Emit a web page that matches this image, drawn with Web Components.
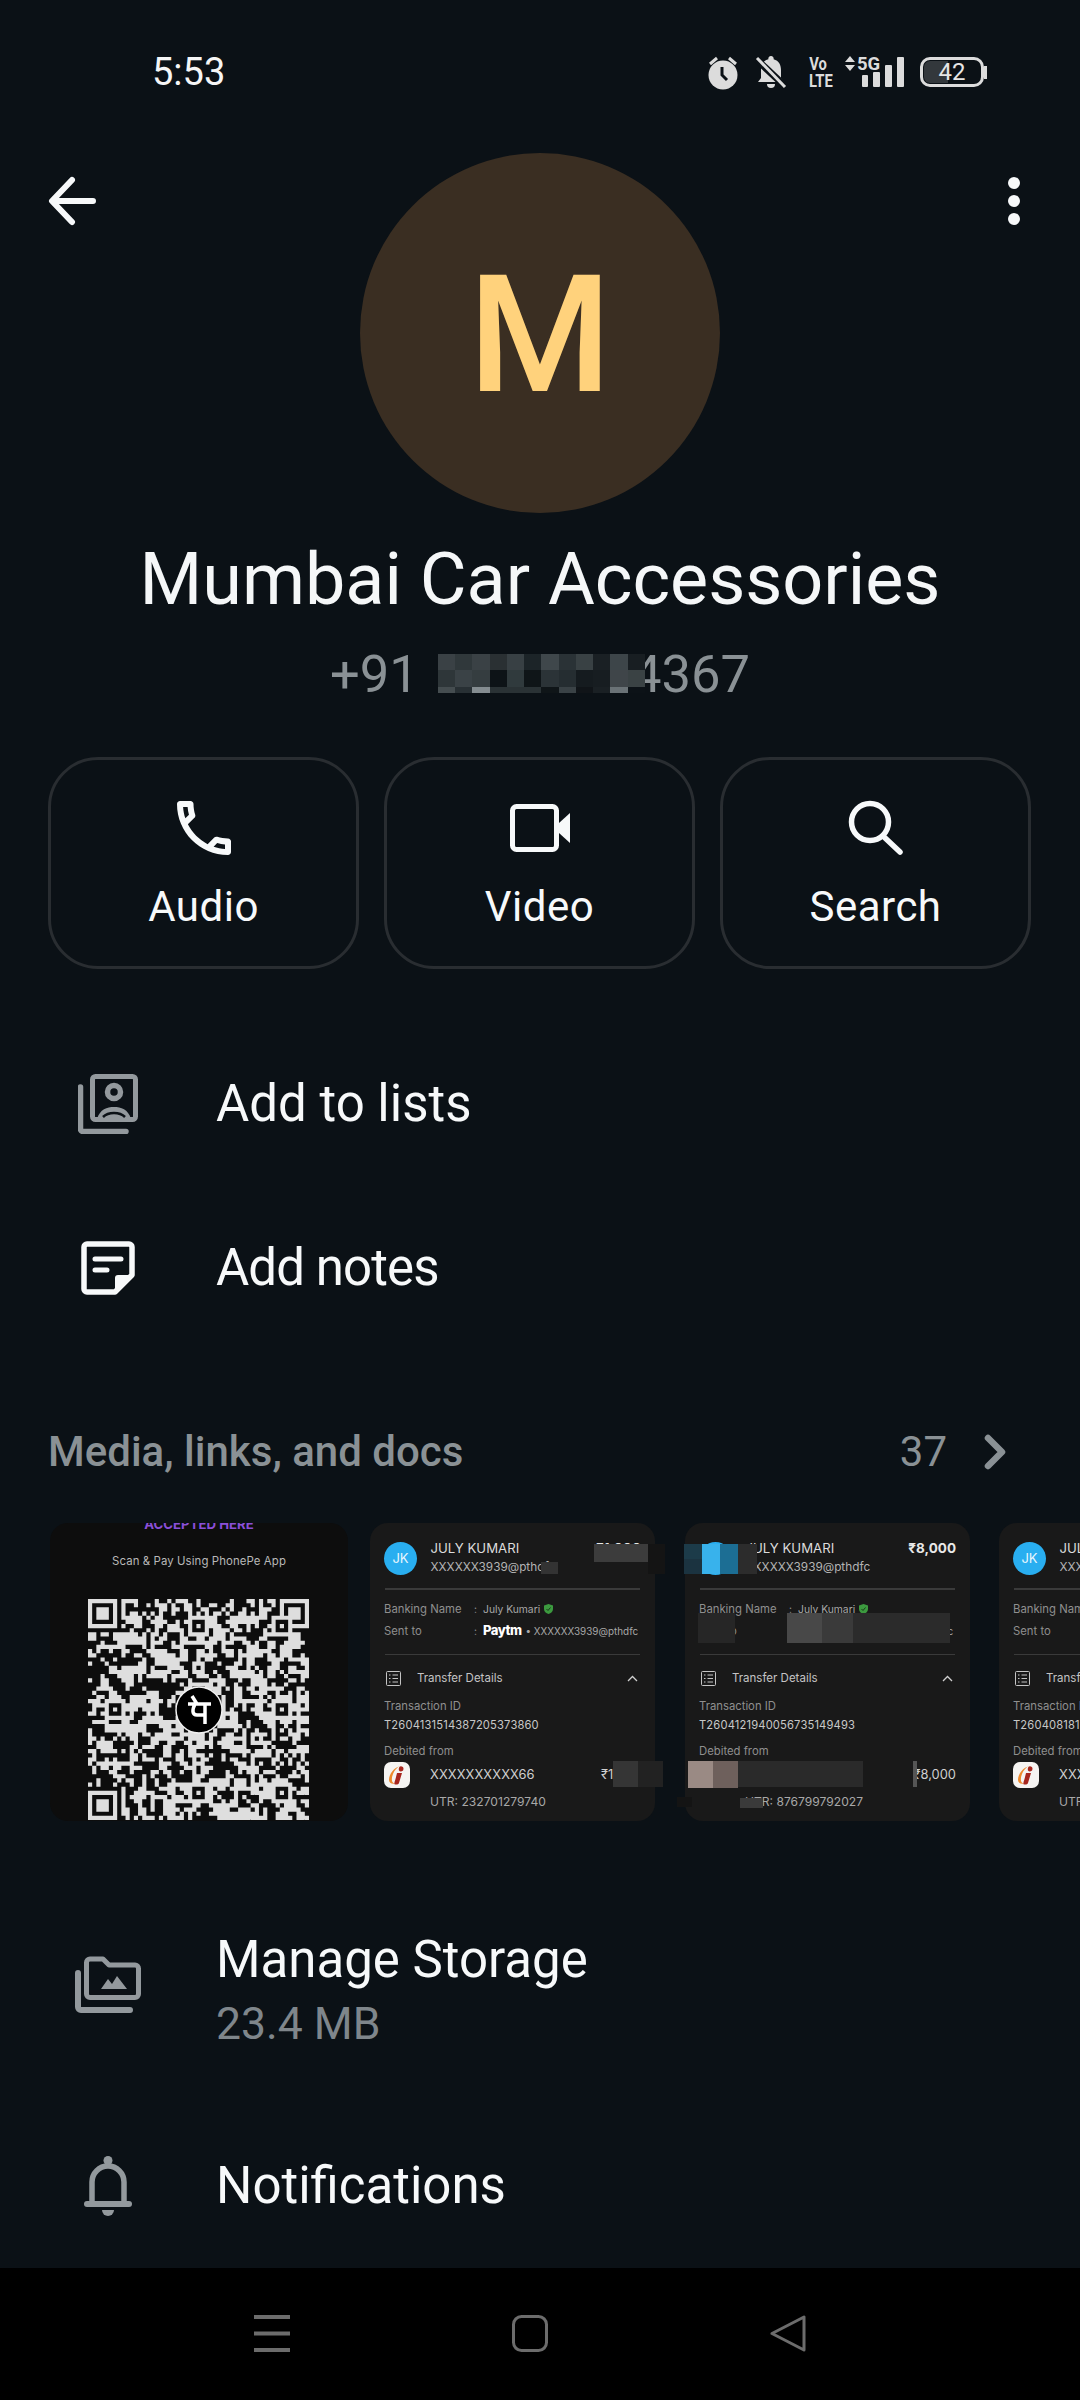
<!DOCTYPE html>
<html>
<head>
<title>Mumbai Car Accessories</title>
<meta charset="utf-8"/>

<style>
html, body { margin: 0; padding: 0; background: #0b1116; }
body {
  width: 1080px;
  height: 2400px;
  display: flex;
  flex-direction: column;
  overflow: hidden;
  font-family: Roboto, "Noto Sans", sans-serif;
  color: #f5f7f8;
}
main { flex: 1; min-height: 0; overflow: hidden; }
</style>

<script>

class StatusBar extends HTMLElement {
  constructor() {
    super()
    this.attachShadow({mode: 'open'}).innerHTML = `
<style>
:host { display: flex; align-items: flex-start; height: 153px; padding: 55px 93px 0 152px; box-sizing: border-box; }
.time { font: 450 38px/34px Roboto, sans-serif; color: #f6f6f6; flex: 1; }
.icons { display: flex; align-items: flex-start; color: #dcdcdc; }
svg { display: block; overflow: visible; }
.volte { width: 22px; margin: 0 16px 0 21px; font: 700 18px/17px Roboto, sans-serif; text-align: center; }
.volte span { display: block; transform: scaleX(.82); white-space: nowrap; }
.batt { display: flex; align-items: center; margin: 2px 0 0 16px; }
.box { position: relative; box-sizing: border-box; width: 64px; height: 30px; border: 3px solid #dcdcdc; border-radius: 10px; display: flex; align-items: center; justify-content: center; font: 400 24px/24px Roboto, sans-serif; color: #e6e6e6; }
.fill { position: absolute; left: 1px; top: 1px; bottom: 1px; width: 24px; background: #33383c; border-radius: 6px 0 0 6px; }
.box b { position: relative; font-weight: 400; }
.nub { width: 3px; height: 13px; background: #dcdcdc; }
</style>
<div class="time">5:53</div>
<div class="icons">
  <svg width="30" height="34" viewBox="0 0 30 34" fill="none">
    <path d="M2 9 9 3M28 9 21 3" stroke="#dcdcdc" stroke-width="3"/>
    <circle cx="15" cy="20" r="14.5" fill="#dcdcdc"/>
    <path d="M14 12V20L19 25" stroke="#0b1116" stroke-width="3"/>
  </svg>
  <svg width="30" height="34" viewBox="0 0 30 34" style="margin-left:18px" fill="none">
    <path d="M15 1a2.6 2.6 0 0 1 2.6 3.2C23 5.500 25 10 25 15V23l3 4H2l3-4V15C5 10 7 5.500 12.400 4.200A2.600 2.600 0 0 1 15 1z" fill="#dcdcdc"/>
    <path d="M11 29h8a4 4 0 0 1-8 0z" fill="#dcdcdc"/>
    <path d="M0 4 30 32" stroke="#0b1116" stroke-width="7"/>
    <path d="M1 3 29 32" stroke="#dcdcdc" stroke-width="3"/>
  </svg>
  <div class="volte"><span>Vo</span><span>LTE</span></div>
  <svg width="59" height="33" viewBox="0 0 59 33" style="margin-top:1px">
    <path d="M0 6 5 0l5 6zM0 9h10l-5 6z" fill="#dcdcdc"/>
    <text x="12" y="14" font-family="Roboto, sans-serif" font-weight="700" font-size="18.500" fill="#dcdcdc">5G</text>
    <rect x="17" y="19" width="6" height="12" rx="1" fill="#dcdcdc"/>
    <rect x="28" y="16" width="7" height="15" rx="1" fill="#dcdcdc"/>
    <rect x="40" y="9" width="7" height="22" rx="1" fill="#dcdcdc"/>
    <rect x="52" y="1" width="7" height="30" rx="1" fill="#dcdcdc"/>
  </svg>
  <div class="batt"><div class="box"><div class="fill"></div><b>42</b></div><div class="nub"></div></div>
</div>`
  }
}
customElements.define('status-bar', StatusBar)

class ContactHeader extends HTMLElement {
  constructor() {
    super()
    this.attachShadow({mode: 'open'}).innerHTML = `
<style>
:host { display: block; text-align: center; }
svg { display: block; }
.top { display: grid; grid-template-columns: 1fr 360px 1fr; }
.back { margin: 23px 0 0 47px; }
.more { margin: 23px 0 0 auto; padding-right: 59px; }
.avatar { width: 360px; height: 360px; border-radius: 50%; background: #3a2e22; color: #ffd27c; font: 500 164px/364px Roboto, sans-serif; }
.name { font: 400 71.900px/84px Roboto, sans-serif; margin-top: 25px; white-space: nowrap; }
.phone { display: flex; justify-content: center; align-items: center; font: 400 52.500px/60px Roboto, sans-serif; color: #8a9195; margin-top: 22px; }
.pix { display: grid; grid-template-columns: repeat(12, 17.250px); grid-template-rows: 16px 17px 6px; width: 207px; height: 39px; margin: -1px -13px 0 19px; position: relative; }
</style>
<div class="top">
  <svg class="back" width="50" height="50" viewBox="0 0 50 50" fill="none" stroke="#f7f9fa" stroke-width="6" stroke-linecap="round" stroke-linejoin="round">
    <path d="M46 25H6M25 4 5 25 25 46"/>
  </svg>
  <div class="avatar">M</div>
  <svg class="more" width="14" height="50" viewBox="0 0 14 50" fill="#f7f9fa">
    <circle cx="7" cy="7" r="6"/><circle cx="7" cy="25" r="6"/><circle cx="7" cy="43" r="6"/>
  </svg>
</div>
<div class="name"><slot name="name"></slot></div>
<div class="phone"><span>+91</span><div class="pix"></div><span>4367</span></div>`
    const cells = ['3a4145','30383b','3a4145','2a3033','384044','1c2428','3f474b','2a3236','394144','1a2024','3d4549','181e22',
      '2e3639','3a4246','353d40','0d1317','303a3d','0f1518','2b3337','252d31','151b1f','171d21','3f4549','3a4244',
      '454d50','283034','848c90','2a3235','2a3235','2a3235','0f1518','3a4246','101418','1a2024','6a7276','0c1217']
    const pix = this.shadowRoot.querySelector('.pix')
    cells.forEach(c => {
      const cell = document.createElement('div')
      cell.style.background = `#${c}`
      pix.appendChild(cell)
    })
  }
}
customElements.define('contact-header', ContactHeader)

class ActionButton extends HTMLElement {
  constructor() {
    super()
    this.attachShadow({mode: 'open'}).innerHTML = `
<style>
:host { display: flex; flex-direction: column; align-items: center; box-sizing: border-box; width: 311px; height: 212px; border: 3px solid #292d31; border-radius: 50px; color: #f7f9fa; font: 400 42px/50px Roboto, sans-serif; }
.icon { height: 72px; margin-top: 32px; display: flex; align-items: center; }
.label { margin-top: 18px; letter-spacing: .5px; }
</style>
<div class="icon"><slot name="icon"></slot></div>
<div class="label"><slot></slot></div>`
  }
}
customElements.define('action-button', ActionButton)

class ListRow extends HTMLElement {
  constructor() {
    super()
    this.attachShadow({mode: 'open'}).innerHTML = `
<style>
:host { display: flex; align-items: center; height: 164px; }
.icon { width: 216px; display: flex; justify-content: center; flex: none; }
.title { font: 400 51px/60px Roboto, sans-serif; color: #f7f9fa; }
.sub { display: block; font: 400 44.500px/54px Roboto, sans-serif; letter-spacing: 0; color: #7f868b; }
::slotted([slot=sub]) { display: block; margin-top: 7px; }
</style>
<div class="icon"><slot name="icon"></slot></div>
<div><div class="title"><slot></slot></div><slot class="sub" name="sub"></slot></div>`
  }
}
customElements.define('list-row', ListRow)

class MediaHeader extends HTMLElement {
  constructor() {
    super()
    this.attachShadow({mode: 'open'}).innerHTML = `
<style>
:host { display: flex; align-items: center; height: 60px; padding: 0 74px 0 48px; color: #8a9195; }
.title { flex: 1; font: 500 42px/60px Roboto, sans-serif; }
.count { font: 400 42px/60px Roboto, sans-serif; margin-right: 37px; }
</style>
<div class="title"><slot></slot></div>
<div class="count"><slot name="count"></slot></div>
<svg width="22" height="36" viewBox="0 0 22 36" fill="none" stroke="#8a9195" stroke-width="6.500" stroke-linecap="round" stroke-linejoin="round"><path d="M4 4 18 18 4 32"/></svg>`
  }
}
customElements.define('media-header', MediaHeader)

class QrThumb extends HTMLElement {
  constructor() {
    super()
    this.attachShadow({mode: 'open'}).innerHTML = `
<style>
:host { display: block; flex: none; width: 298px; height: 298px; margin-right: -8px; background: #0d0d0d; border-radius: 18px; overflow: hidden; position: relative; font-family: Inter, sans-serif; text-align: center; }
svg { display: block; }
.acc { font: 700 13.200px/14px Inter, sans-serif; color: #8a4fd8; margin-top: -6px; }
.scan { font: 400 11.400px/16px Inter, sans-serif; color: #b8b8b8; margin-top: 22px; letter-spacing: .1px; }
.qr { margin: 30px 0 0 38px; width: 221px; height: 221px; }
.logo { position: absolute; left: 125px; top: 163px; }
</style>
<div class="acc">ACCEPTED HERE</div>
<div class="scan">Scan &amp; Pay Using PhonePe App</div>
<svg class="qr" viewBox="0 0 53 53" width="221" height="221"></svg>
<svg class="logo" width="48" height="48" viewBox="0 0 48 48" fill="none">
  <circle cx="24" cy="24" r="23" fill="#000" stroke="#f0f0f0" stroke-width="1.500"/>
  <path d="M13 18H36M30 18V38M20 18C17 24 17 29 22 29H30M22 18 17 10" stroke="#fff" stroke-width="3.500"/>
</svg>`
    this.drawQr()
  }

  drawQr() {
    const N = 53
    const grid = []
    let seed = 20417
    const rand = () => {
      seed = (seed * 1103515245 + 12345) & 0x7fffffff
      return (seed >> 12) % 100
    }
    for (let y = 0; y < N; y++) {
      grid.push([])
      for (let x = 0; x < N; x++) {
        // Real codes look clumpy, so lean on the cell to the left and above.
        const near = (x && grid[y][x-1]) + (y && grid[y-1][x])
        grid[y].push(rand() < 38 + near * 14 ? 1 : 0)
      }
    }
    const stamp = (cx, cy, size) => {
      const r = (size - 1) / 2
      for (let y = -r - 1; y <= r + 1; y++) {
        for (let x = -r - 1; x <= r + 1; x++) {
          const px = cx + x, py = cy + y
          if (px < 0 || py < 0 || px >= N || py >= N) continue
          const d = Math.max(Math.abs(x), Math.abs(y))
          if (size === 7) grid[py][px] = (d === 3 || d <= 1) ? 1 : 0
          else if (d <= 2) grid[py][px] = (d === 2 || d === 0) ? 1 : 0
        }
      }
    }
    ;[[3,3],[49,3],[3,49]].forEach(p => stamp(p[0], p[1], 7))
    ;[[26,6],[46,6],[6,26],[46,26],[26,46],[46,46]].forEach(p => stamp(p[0], p[1], 5))
    let d = ''
    grid.forEach((row, y) => row.forEach((on, x) => { if (on) d += `M${x} ${y}h1v1h-1z` }))
    const path = document.createElementNS('http://www.w3.org/2000/svg', 'path')
    path.setAttribute('d', d)
    path.setAttribute('fill', '#dedede')
    this.shadowRoot.querySelector('.qr').appendChild(path)
  }
}
customElements.define('qr-thumb', QrThumb)

class RedactBlock extends HTMLElement {
  constructor() {
    super()
    this.attachShadow({mode: 'open'}).innerHTML = `<style>:host { display: block; position: absolute; }</style>`
  }
  connectedCallback() {
    const a = n => this.getAttribute(n)
    this.style.cssText = `left:${a('x')}px;top:${a('y')}px;width:${a('w')}px;height:${a('h')}px;background:${a('c')}`
  }
}
customElements.define('redact-block', RedactBlock)

class PayThumb extends HTMLElement {
  constructor() {
    super()
    this.attachShadow({mode: 'open'})
  }
  connectedCallback() {
    const a = n => this.getAttribute(n) || ''
    this.shadowRoot.innerHTML = `
<style>
:host { display: block; flex: none; width: 285px; height: 298px; position: relative; font-family: Inter, sans-serif; }
svg { display: block; }
.card { width: 100%; height: 100%; background: #191919; border-radius: 18px; overflow: hidden; box-sizing: border-box; padding: 0 14px; white-space: nowrap; }
.paid { font: 700 12px/14px Inter, sans-serif; color: #ddd; margin: -11px 0 13px 1px; }
.head { display: flex; align-items: center; height: 38px; }
.jk { width: 33px; height: 33px; border-radius: 50%; background: #29aef0; color: #e8f6fd; font: 400 13px/33px Inter, sans-serif; text-align: center; flex: none; margin-right: 13.500px; }
.who { flex: 1; min-width: 0; }
.n { font: 400 13.200px/19px Inter, sans-serif; color: #dcdcdc; }
.u { font: 400 11.800px/19px Inter, sans-serif; color: #b4b4b4; }
.amt { font: 700 13.500px/19px Inter, sans-serif; color: #e8e8e8; align-self: flex-start; }
hr { border: 0; height: 1.500px; background: #3a3a3a; margin: 11px 1px 0; }
.kv { display: flex; font: 400 11.300px/22px Inter, sans-serif; color: #8f8f8f; }
.kv .k { width: 90px; flex: none; }
.kv .c { width: 9px; flex: none; font-size: 10.300px; }
.kv .v { color: #a8a8a8; display: flex; align-items: center; font-size: 10.300px; }
.rows { margin-top: 8px; }
.pm { font: 800 13px/15px Inter, sans-serif; color: #fff; letter-spacing: -.5px; margin-right: 4px; }
.rest { font-size: 9.900px; }
.xfer { display: flex; align-items: center; height: 24px; margin-top: 11px; font: 400 11.500px/24px Inter, sans-serif; color: #c4c4c4; }
.xfer svg:first-child { margin: 0 16px 0 2px; }
.xfer span { flex: 1; }
.xfer svg:last-child { margin-right: 3px; }
.lab { font: 400 11.300px/16px Inter, sans-serif; color: #8f8f8f; margin-top: 8px; }
.txn { font: 400 11.200px/20px Inter, sans-serif; color: #c8c8c8; margin-top: 1px; letter-spacing: .15px; }
.deb { display: flex; align-items: center; height: 26px; margin-top: 3px; }
.ic { margin-right: 20px; flex: none; }
.acct { flex: 1; font: 400 12.900px/26px Inter, sans-serif; color: #d0d0d0; letter-spacing: .1px; }
.damt { font: 400 12.900px/26px Inter, sans-serif; color: #d0d0d0; }
.utr { font: 400 12.100px/18px Inter, sans-serif; color: #a8a8a8; margin: 5px 0 0 46px; }
</style>
<div class="card">
  <div class="paid">Paid to</div>
  <div class="head">
    <div class="jk">JK</div>
    <div class="who"><div class="n">JULY KUMARI</div><div class="u">XXXXXX3939@pthdfc</div></div>
    <div class="amt">${a('amount')}</div>
  </div>
  <hr>
  <div class="rows">
    <div class="kv"><div class="k">Banking Name</div><div class="c">:</div><div class="v">July Kumari
      <svg width="9" height="10" viewBox="0 0 9 10" style="margin-left:4px"><path d="M4.500 0 9 1.600V5c0 2.500-2 4.200-4.500 5C2 9.200 0 7.500 0 5V1.600z" fill="#3c9a3f"/><path d="M2.500 5 4 6.500 6.500 3.500" stroke="#173d18" stroke-width="1" fill="none"/></svg>
    </div></div>
    <div class="kv"><div class="k">Sent to</div><div class="c">:</div><div class="v"><span class="pm">Paytm</span><span class="rest">• XXXXXX3939@pthdfc</span></div></div>
  </div>
  <hr style="margin-top:12px">
  <div class="xfer">
    <svg width="15" height="15" viewBox="0 0 15 15" fill="none" stroke="#c4c4c4" stroke-width="1"><rect x=".5" y=".5" width="14" height="14" rx="1"/><path d="M3 4h1.500M3 7.500h1.500M3 11h1.500M6.500 4H12M6.500 7.500H12M6.500 11H12"/></svg>
    <span>Transfer Details</span>
    <svg width="11" height="7" viewBox="0 0 11 7" fill="none" stroke="#d0d0d0" stroke-width="1.300"><path d="M1 6 5.500 1.500 10 6"/></svg>
  </div>
  <div class="lab">Transaction ID</div>
  <div class="txn">${a('txn')}</div>
  <div class="lab">Debited from</div>
  <div class="deb">
    <svg class="ic" width="26" height="26" viewBox="0 0 26 26">
      <rect width="26" height="26" rx="7" fill="#f6f4f2"/>
      <path d="M17 4C10 5 5 12 5 18c0 3 3 4.500 6 3.500C7.500 21 7 17 9 12c1.500-4 4-7 8-8z" fill="#ee8a2c"/>
      <path d="M13 11h5l-3 10c-.5 1.500-3 2-4.500 1.200C10 21 11 19 11.500 17zM16 4.500a2.500 2.500 0 0 1 3.500 2.500 2.500 2.500 0 0 1-4.500 1.500C14.500 6.800 15 5 16 4.500z" fill="#a8261e"/>
    </svg>
    <div class="acct">XXXXXXXXXX66</div>
    <div class="damt">${a('debit')}</div>
  </div>
  <div class="utr">${a('utr')}</div>
</div>
<slot></slot>`
  }
}
customElements.define('pay-thumb', PayThumb)

class MediaStrip extends HTMLElement {
  constructor() {
    super()
    this.attachShadow({mode: 'open'}).innerHTML = `
<style>
:host { display: flex; gap: 30px; height: 298px; padding-left: 50px; overflow: hidden; }
</style>
<slot></slot>`
  }
}
customElements.define('media-strip', MediaStrip)

class NavBar extends HTMLElement {
  constructor() {
    super()
    this.attachShadow({mode: 'open'}).innerHTML = `
<style>
:host { display: flex; flex: none; height: 132px; background: #000; box-sizing: border-box; padding: 47px 0 0 254px; align-items: flex-start; }
</style>
<svg width="36" height="37" viewBox="0 0 36 37" fill="#6c6c6c"><rect y="0" width="36" height="4"/><rect y="16.500" width="36" height="4"/><rect y="33" width="36" height="4"/></svg>
<svg width="36" height="37" viewBox="0 0 36 37" fill="none" stroke="#6c6c6c" stroke-width="3" style="margin-left:222px"><rect x="1.500" y="1.500" width="33" height="34" rx="8"/></svg>
<svg width="36" height="37" viewBox="0 0 36 37" fill="none" stroke="#6c6c6c" stroke-width="3" stroke-linejoin="round" style="margin-left:222px"><path d="M2 18.500 34 2V35z"/></svg>`
  }
}
customElements.define('nav-bar', NavBar)

</script>
</head>

<body>

<status-bar></status-bar>

<main>
  <contact-header><span slot="name">Mumbai Car Accessories</span></contact-header>

  <div style="display:flex;gap:25px;padding-left:48px;margin-top:53px">
    <action-button>
      <svg slot="icon" width="72" height="72" viewBox="0 0 24 24" fill="#f7f9fa"><path d="M6.540 5c.06.89.21 1.760.45 2.590l-1.200 1.200c-.41-1.200-.67-2.470-.76-3.790h1.510m9.860 12.020c.85.24 1.720.39 2.600.45v1.490c-1.320-.09-2.590-.35-3.800-.75l1.200-1.190M7.500 3H4c-.55 0-1 .45-1 1 0 9.390 7.610 17 17 17 .55 0 1-.45 1-1v-3.490c0-.55-.45-1-1-1-1.240 0-2.450-.2-3.570-.57-.1-.04-.21-.05-.31-.05-.26 0-.51.1-.71.29l-2.200 2.200c-2.830-1.450-5.150-3.760-6.590-6.590l2.200-2.200c.28-.28.36-.67.25-1.020C8.700 6.450 8.500 5.250 8.500 4c0-.55-.45-1-1-1z"/></svg>
      Audio
    </action-button>
    <action-button>
      <svg slot="icon" width="60" height="48" viewBox="0 0 60 48"><rect x="2.500" y="2.500" width="44" height="43" rx="4" fill="none" stroke="#f7f9fa" stroke-width="5"/><path d="M49 19 60 9V39L49 29z" fill="#f7f9fa"/></svg>
      Video
    </action-button>
    <action-button>
      <svg slot="icon" width="56" height="56" viewBox="0 0 56 56" fill="none" stroke="#f7f9fa" stroke-width="5.500" stroke-linecap="round"><circle cx="22" cy="22" r="18.500"/><path d="M35 36 52 52"/></svg>
      Search
    </action-button>
  </div>

  <div style="margin-top:53px">
    <list-row>
      <svg slot="icon" width="60" height="60" viewBox="0 0 60 60" fill="none">
        <path d="M2.500 13V55a2.500 2.500 0 0 0 2.500 2.500H48" stroke="#93999d" stroke-width="5.500" stroke-linecap="round"/>
        <rect x="14.500" y="2.500" width="43" height="43" rx="3" stroke="#93999d" stroke-width="5"/>
        <circle cx="36" cy="18" r="6.500" stroke="#93999d" stroke-width="5.500"/>
        <path d="M19 45C22 35 29 33 36 33S50 35 53 45z" fill="#93999d"/>
        <path d="M25 43C28 40 32 39 36 39S44 40 47 43" stroke="#0b1116" stroke-width="2.500"/>
      </svg>
      Add to lists
    </list-row>
    <list-row style="letter-spacing:-.9px">
      <svg slot="icon" width="54" height="54" viewBox="0 0 54 54" fill="none" stroke="#f7f9fa">
        <path d="M6 3H48a3 3 0 0 1 3 3V34L34 51H6a3 3 0 0 1-3-3V6a3 3 0 0 1 3-3z" stroke-width="5.500" stroke-linejoin="round"/>
        <path d="M53 34H37a3 3 0 0 0-3 3V53z" fill="#f7f9fa" stroke="none"/>
        <path d="M14 18H40M14 29H26" stroke-width="5" stroke-linecap="round"/>
      </svg>
      Add notes
    </list-row>
  </div>

  <media-header style="margin-top:72px">Media, links, and docs<span slot="count">37</span></media-header>

  <media-strip style="margin-top:41px">
    <qr-thumb></qr-thumb>
    <pay-thumb amount="₹1,000" txn="T2604131514387205373860" debit="₹1,000" utr="UTR: 232701279740">
      <redact-block x="224" y="21" w="54" h="18" c="#3c3c3c"></redact-block>
      <redact-block x="278" y="21" w="17" h="30" c="#141414"></redact-block>
      <redact-block x="171" y="39" w="17" h="12" c="#333"></redact-block>
      <redact-block x="243" y="238" w="25" h="26" c="#353535"></redact-block>
      <redact-block x="268" y="238" w="25" h="26" c="#222"></redact-block>
    </pay-thumb>
    <pay-thumb amount="₹8,000" txn="T2604121940056735149493" debit="₹8,000" utr="UTR: 876799792027">
      <redact-block x="-1" y="21" w="18" h="15" c="#1c3b49"></redact-block>
      <redact-block x="-1" y="36" w="18" h="15" c="#1b3340"></redact-block>
      <redact-block x="17" y="21" w="18" h="30" c="#38b2ec"></redact-block>
      <redact-block x="35" y="21" w="18" h="30" c="#1c6e94"></redact-block>
      <redact-block x="53" y="21" w="19" h="30" c="#2c2c2c"></redact-block>
      <redact-block x="13" y="90" w="37" h="30" c="#262626"></redact-block>
      <redact-block x="102" y="90" w="35" h="30" c="#484848"></redact-block>
      <redact-block x="137" y="90" w="31" h="30" c="#3a3a3a"></redact-block>
      <redact-block x="168" y="90" w="97" h="30" c="#2b2b2b"></redact-block>
      <redact-block x="3" y="238" w="25" h="27" c="#9a8a84"></redact-block>
      <redact-block x="28" y="238" w="25" h="27" c="#6e605c"></redact-block>
      <redact-block x="53" y="238" w="125" h="26" c="#2a2a2a"></redact-block>
      <redact-block x="228" y="238" w="4" h="26" c="#555"></redact-block>
      <redact-block x="55" y="275" w="23" h="10" c="#3a3a3a"></redact-block>
      <redact-block x="-8" y="274" w="15" h="10" c="#141414"></redact-block>
    </pay-thumb>
    <pay-thumb style="margin-left:-1px" txn="T260408181" utr="UTR:"></pay-thumb>
  </media-strip>

  <div style="margin-top:87px">
    <list-row>
      <svg slot="icon" width="66" height="57" viewBox="0 0 66 57" fill="none" stroke="#93999d" style="margin-bottom:12px">
        <path d="M3 17V51a3 3 0 0 0 3 3H55" stroke-width="6" stroke-linecap="round"/>
        <path d="M15 3H28L34 9H60a3.500 3.500 0 0 1 3.500 3.500V38a3.500 3.500 0 0 1-3.500 3.500H15a3.500 3.500 0 0 1-3.500-3.500V6.500A3.500 3.500 0 0 1 15 3z" stroke-width="5" stroke-linejoin="round"/>
        <path d="M26 33 33 23 37 28 42 20 52 33z" fill="#93999d" stroke="none"/>
      </svg>
      Manage Storage
      <span slot="sub">23.4 MB</span>
    </list-row>
    <div style="height:32px"></div>
    <list-row>
      <svg slot="icon" width="48" height="60" viewBox="0 0 48 60" fill="none" stroke="#93999d">
        <circle cx="24" cy="4.500" r="4.500" fill="#93999d" stroke="none"/>
        <path d="M8 48V26a16 16 0 0 1 32 0V48" stroke-width="5.500"/>
        <path d="M3 48H45" stroke-width="6" stroke-linecap="round"/>
        <path d="M18 54H30a6 6 0 0 1-12 0z" fill="#93999d" stroke="none"/>
      </svg>
      Notifications
    </list-row>
  </div>
</main>

<nav-bar></nav-bar>

</body>
</html>
